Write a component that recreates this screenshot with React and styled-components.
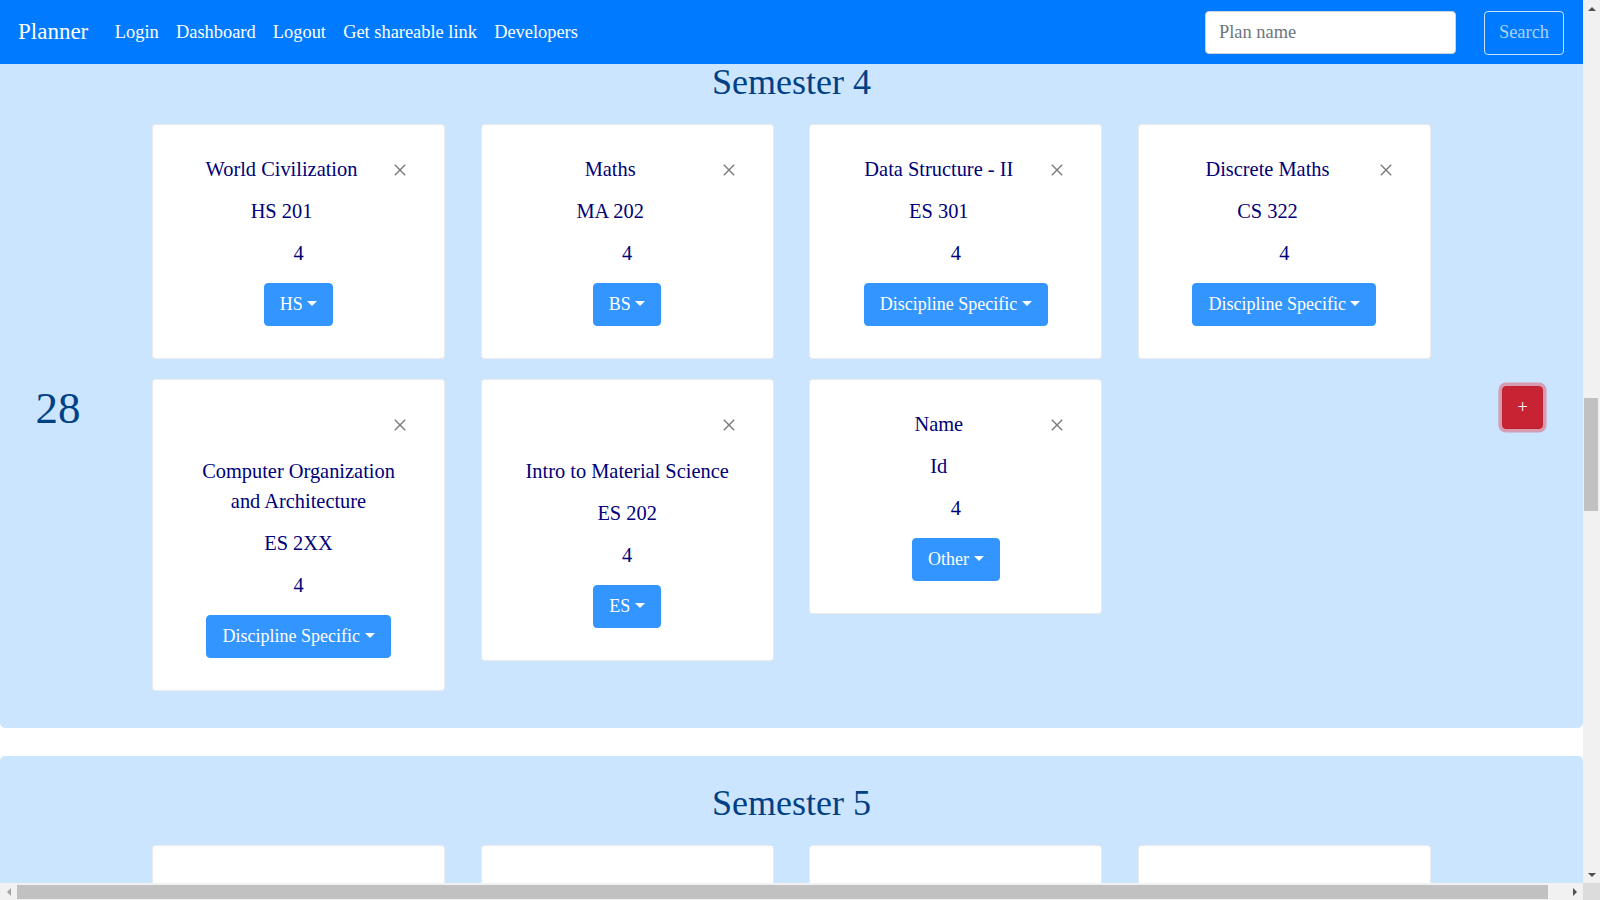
import React from 'react';
import styled, { createGlobalStyle } from 'styled-components';

const GlobalStyle = createGlobalStyle`
  html, body {
    margin: 0;
    padding: 0;
    overflow: hidden;
  }
  body {
    font-family: 'Liberation Serif', 'Times New Roman', serif;
    background: #fff;
  }
  * {
    box-sizing: border-box;
  }
`;

// window frame: page viewport + classic scrollbars
const Frame = styled.div`
  display: grid;
  grid-template-columns: 1583px 17px;
  grid-template-rows: 883px 17px;
  width: 1600px;
  height: 900px;
`;

const Viewport = styled.div`
  position: relative;
  overflow: hidden;
  background: #fff;
`;

const Navbar = styled.nav`
  position: absolute;
  top: 0;
  left: 0;
  right: 0;
  z-index: 10;
  height: 64px;
  display: flex;
  align-items: center;
  padding: 1px 19px 0 18px;
  background: #007bff;
`;

const Brand = styled.a`
  margin-right: 18px;
  font-size: 23px;
  line-height: 1.5;
  color: #fff;
  text-decoration: none;
`;

const NavList = styled.div`
  display: flex;
`;

const NavLink = styled.a`
  padding: 0 8.6px;
  font-size: 18.4px;
  line-height: 27px;
  color: #fff;
  text-decoration: none;
`;

const SearchForm = styled.form`
  display: flex;
  gap: 28px;
  margin-left: auto;
`;

const SearchInput = styled.input`
  width: 251px;
  height: 43px;
  padding: 0 13px;
  border: 1px solid #ced4da;
  border-radius: 4px;
  font-family: inherit;
  font-size: 18.4px;
  color: #495057;
  outline: none;

  &::placeholder {
    color: #6c757d;
  }
`;

const SearchButton = styled.button`
  width: 80px;
  height: 44px;
  border: 1px solid rgba(248, 249, 250, 0.8);
  border-radius: 4px;
  background: transparent;
  font-family: inherit;
  font-size: 18.4px;
  color: #acd2fc;
`;

const Page = styled.main`
  padding-top: 35px;
`;

const Panel = styled.section`
  margin-bottom: 28px;
  padding: 26px 0 37px;
  border-radius: 5px;
  background: #cce5ff;
`;

const Heading = styled.h2`
  margin: 0 0 20px;
  font-size: 36px;
  font-weight: 400;
  line-height: 1.2;
  text-align: center;
  color: #004085;
`;

const SemesterRow = styled.div`
  display: grid;
  grid-template-columns: 116px 1279px 116px;
  column-gap: 36px;
  align-items: center;
`;

const CreditTotal = styled.div`
  font-size: 45px;
  line-height: 1.2;
  text-align: center;
  color: #004085;
`;

const CardGrid = styled.div`
  display: grid;
  grid-template-columns: repeat(4, 293px);
  column-gap: 35.67px;
  row-gap: 20px;
  align-items: start;
`;

const Card = styled.div`
  padding: 29px 36px 32px;
  border: 1px solid rgba(0, 0, 0, 0.08);
  border-radius: 4px;
  background: #fff;
  text-align: center;
  font-size: 20.4px;
  line-height: 30px;
  color: #000078;
`;

const CloseButton = styled.button`
  float: right;
  display: flex;
  align-items: flex-start;
  width: 34px;
  height: 47px;
  padding: 10px 0 0 20px;
  border: none;
  background: transparent;
`;

const TitleLine = styled.div`
  margin-bottom: 12px;
`;

const Title = styled.span`
  display: inline-block;
`;

const Line = styled.div`
  margin-bottom: ${p => p.$gap || 12}px;
`;

const Button = styled.button`
  display: inline-block;
  padding: 7px 15px;
  border: 1px solid ${p => p.$border};
  border-radius: 4px;
  background: ${p => p.$bg};
  font-family: inherit;
  font-size: 18px;
  line-height: 27px;
  color: #fff;
  box-shadow: ${p => p.$ring ? '0 0 0 3.6px rgba(225, 83, 97, 0.5)' : 'none'};
`;

const AddButton = styled(Button)`
  padding: 7px 14px;
`;

const Caret = styled.span`
  display: inline-block;
  margin-left: 0.255em;
  vertical-align: 0.255em;
  border-top: 0.3em solid;
  border-left: 0.3em solid transparent;
  border-right: 0.3em solid transparent;
`;

const AddCell = styled.div`
  display: flex;
  justify-content: center;
  padding-right: 5px;
`;

// scrollbars
const VScroll = styled.div`
  display: flex;
  flex-direction: column;
  background: #f1f1f1;
`;

const HScroll = styled.div`
  display: flex;
  align-items: center;
  background: #f1f1f1;
`;

const Corner = styled.div`
  background: #dcdcdc;
`;

const ArrowBox = styled.div`
  display: flex;
  align-items: center;
  justify-content: center;
  flex: none;
  width: ${p => p.$w}px;
  height: ${p => p.$h}px;
`;

const Arrow = styled.span`
  width: 0;
  height: 0;
  border: 4px solid transparent;
  ${p => p.$dir === 'up' && 'border-bottom-color: #505050; border-top-width: 0;'}
  ${p => p.$dir === 'down' && 'border-top-color: #505050; border-bottom-width: 0;'}
  ${p => p.$dir === 'left' && 'border-right-color: #a3a3a3; border-left-width: 0;'}
  ${p => p.$dir === 'right' && 'border-left-color: #505050; border-right-width: 0;'}
`;

const VTrack = styled.div`
  flex: 1;
`;

const VThumb = styled.div`
  width: 14px;
  height: 113px;
  margin-left: 1px;
  background: #c1c1c1;
`;

const HTrack = styled.div`
  flex: 1;
  height: 100%;
  display: flex;
  align-items: center;
`;

const HThumb = styled.div`
  height: 14px;
  background: #c1c1c1;
`;

const CloseIcon = () => (
  <svg width="12" height="12" viewBox="0 0 12 12">
    <path d="M0.8 0.8 L11.2 11.2 M11.2 0.8 L0.8 11.2" stroke="#7a7a7a" strokeWidth="1.4" fill="none" />
  </svg>
);

const semesters = [
  {
    name: 'Semester 4',
    credits: 28,
    courses: [
      { title: 'World Civilization', code: 'HS 201', credits: 4, type: 'HS' },
      { title: 'Maths', code: 'MA 202', credits: 4, type: 'BS' },
      { title: 'Data Structure - II', code: 'ES 301', credits: 4, type: 'Discipline Specific' },
      { title: 'Discrete Maths', code: 'CS 322', credits: 4, type: 'Discipline Specific' },
      { title: 'Computer Organization and Architecture', code: 'ES 2XX', credits: 4, type: 'Discipline Specific' },
      { title: 'Intro to Material Science', code: 'ES 202', credits: 4, type: 'ES' },
      { title: 'Name', code: 'Id', credits: 4, type: 'Other' },
    ],
  },
  {
    name: 'Semester 5',
    credits: 16,
    courses: [
      { title: 'Algorithms', code: 'CS 301', credits: 4, type: 'Discipline Specific' },
      { title: 'Operating Systems', code: 'CS 302', credits: 4, type: 'Discipline Specific' },
      { title: 'Economics', code: 'HS 301', credits: 4, type: 'HS' },
      { title: 'Probability', code: 'MA 301', credits: 4, type: 'BS' },
    ],
  },
];

const CourseCard = ({ course }) => (
  <Card>
    <CloseButton aria-label="Remove"><CloseIcon /></CloseButton>
    <TitleLine><Title>{course.title}</Title></TitleLine>
    <Line>{course.code}</Line>
    <Line $gap={15}>{course.credits}</Line>
    <Button $bg="#3395ff" $border="#3395ff">
      {course.type}<Caret />
    </Button>
  </Card>
);

const Semester = ({ semester }) => (
  <Panel>
    <Heading>{semester.name}</Heading>
    <SemesterRow>
      <CreditTotal>{semester.credits}</CreditTotal>
      <CardGrid>
        {semester.courses.map(c => <CourseCard key={c.code + c.title} course={c} />)}
      </CardGrid>
      <AddCell>
        <AddButton $bg="#c82333" $border="#bd2130" $ring>+</AddButton>
      </AddCell>
    </SemesterRow>
  </Panel>
);

export default function App() {
  return (
    <>
      <GlobalStyle />
      <Frame>
        <Viewport>
          <Navbar>
            <Brand href="#">Planner</Brand>
            <NavList>
              <NavLink href="#">Login</NavLink>
              <NavLink href="#">Dashboard</NavLink>
              <NavLink href="#">Logout</NavLink>
              <NavLink href="#">Get shareable link</NavLink>
              <NavLink href="#">Developers</NavLink>
            </NavList>
            <SearchForm onSubmit={e => e.preventDefault()}>
              <SearchInput placeholder="Plan name" />
              <SearchButton type="submit">Search</SearchButton>
            </SearchForm>
          </Navbar>
          <Page>
            {semesters.map(s => <Semester key={s.name} semester={s} />)}
          </Page>
        </Viewport>
        <VScroll>
          <ArrowBox $w={17} $h={17}><Arrow $dir="up" /></ArrowBox>
          <VTrack>
            <VThumb style={{ marginTop: 381 }} />
          </VTrack>
          <ArrowBox $w={17} $h={17}><Arrow $dir="down" /></ArrowBox>
        </VScroll>
        <HScroll>
          <ArrowBox $w={17} $h={17}><Arrow $dir="left" /></ArrowBox>
          <HTrack>
            <HThumb style={{ width: 1531 }} />
          </HTrack>
          <ArrowBox $w={17} $h={17}><Arrow $dir="right" /></ArrowBox>
        </HScroll>
        <Corner />
      </Frame>
    </>
  );
}
